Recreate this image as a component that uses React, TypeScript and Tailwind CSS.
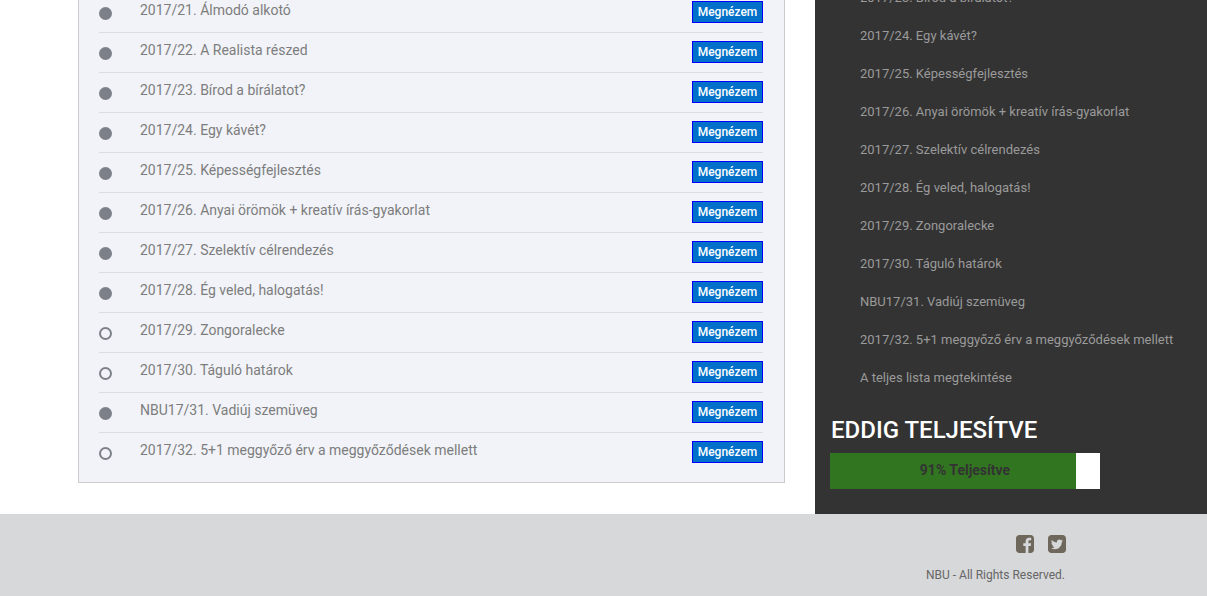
import React from 'react';

const lessons = [
  { title: '2017/21. Álmodó alkotó', done: true },
  { title: '2017/22. A Realista részed', done: true },
  { title: '2017/23. Bírod a bírálatot?', done: true },
  { title: '2017/24. Egy kávét?', done: true },
  { title: '2017/25. Képességfejlesztés', done: true },
  { title: '2017/26. Anyai örömök + kreatív írás-gyakorlat', done: true },
  { title: '2017/27. Szelektív célrendezés', done: true },
  { title: '2017/28. Ég veled, halogatás!', done: true },
  { title: '2017/29. Zongoralecke', done: false },
  { title: '2017/30. Táguló határok', done: false },
  { title: 'NBU17/31. Vadiúj szemüveg', done: true },
  { title: '2017/32. 5+1 meggyőző érv a meggyőződések mellett', done: false },
];

const sideLinks = [
  '2017/23. Bírod a bírálatot?',
  '2017/24. Egy kávét?',
  '2017/25. Képességfejlesztés',
  '2017/26. Anyai örömök + kreatív írás-gyakorlat',
  '2017/27. Szelektív célrendezés',
  '2017/28. Ég veled, halogatás!',
  '2017/29. Zongoralecke',
  '2017/30. Táguló határok',
  'NBU17/31. Vadiúj szemüveg',
  '2017/32. 5+1 meggyőző érv a meggyőződések mellett',
  'A teljes lista megtekintése',
];

const FacebookSquare = () => (
  <svg viewBox="128 128 1536 1536" className="h-[18px] w-[18px] fill-current">
    <path d="M1376 128q119 0 203.5 84.5t84.5 203.5v960q0 119-84.5 203.5t-203.5 84.5h-188v-595h199l30-232h-229v-148q0-56 23.5-84t91.5-28l122-1v-207q-63-9-178-9-136 0-217.5 80t-81.5 226v171h-200v232h200v595h-532q-119 0-203.5-84.5t-84.5-203.5v-960q0-119 84.5-203.5t203.5-84.5h960z" />
  </svg>
);

const TwitterSquare = () => (
  <svg viewBox="128 128 1536 1536" className="h-[18px] w-[18px] fill-current">
    <path d="M1408 610q-56 25-121 34 68-40 93-117-65 38-134 51-61-66-153-66-87 0-148.5 61.5t-61.5 148.5q0 29 5 48-129-7-242-65t-192-155q-29 50-29 106 0 114 91 175-47-1-100-26v2q0 75 50 133.5t123 72.5q-29 8-51 8-13 0-39-4 21 63 74.5 104t121.5 42q-116 90-261 90-26 0-50-3 148 94 322 94 112 0 210-35.5t168-95 120.5-137 75-162 24.5-168.5q0-18-1-27 63-45 105-109zm256-194v960q0 119-84.5 203.5t-203.5 84.5h-960q-119 0-203.5-84.5t-84.5-203.5v-960q0-119 84.5-203.5t203.5-84.5h960q119 0 203.5 84.5t84.5 203.5z" />
  </svg>
);

export default function App() {
  return (
    <div className="h-[596px] overflow-hidden bg-white font-['Roboto',sans-serif]">
      <div className="flex h-[514px] overflow-hidden">
        {/* Lesson list */}
        <main className="w-[815px] shrink-0 pl-[78px] pr-[30px]">
          <div className="-mt-[8px] border border-[#cccccc] bg-[#f1f3f8] pl-[20px] pr-[21px] pb-[9px]">
            {lessons.map((item, i) => (
              <div
                key={item.title}
                className={`flex h-[40px] items-center border-b ${i < lessons.length - 1 ? 'border-[#dcdde0]' : 'border-transparent'}`}
              >
                {item.done ? (
                  <span className="mt-[1px] h-[13px] w-[13px] shrink-0 rounded-full bg-[#7c8189]" />
                ) : (
                  <span className="mt-[1px] h-[13px] w-[13px] shrink-0 rounded-full border-2 border-[#7c8189]" />
                )}
                <span className="ml-[28px] -mt-[5px] flex-1 text-[14px] leading-[20px] text-[#7d7d7d]">
                  {item.title}
                </span>
                <button className="-mt-[2px] h-[22px] w-[71px] border border-[#0000ff] bg-[#0070c9] text-[12px] font-medium leading-[20px] text-white">
                  Megnézem
                </button>
              </div>
            ))}
          </div>
        </main>

        {/* Sidebar */}
        <aside className="flex-1 bg-[#333333] pl-[15px]">
          <ul className="-mt-[21px] pl-[30px]">
            {sideLinks.map((link) => (
              <li key={link} className="flex h-[38px] items-center text-[13px] text-[#9a9a9a]">
                {link}
              </li>
            ))}
          </ul>
          <h3 className="mt-[18px] pl-[1px] text-[24px] font-medium leading-[30px] text-white">EDDIG TELJESÍTVE</h3>
          <div className="relative mt-[8px] h-[36px] w-[270px] bg-white">
            <div className="h-full w-[91%] bg-[#317520]" />
            <span className="absolute inset-0 -top-[1px] flex items-center justify-center text-[14px] font-bold text-[#333333]">
              91% Teljesítve
            </span>
          </div>
        </aside>
      </div>

      {/* Footer */}
      <footer className="flex h-[82px] flex-col items-end bg-[#d7d8da] pr-[141px] pt-[21px]">
        <div className="flex gap-[14px] text-[#6e675c]">
          <FacebookSquare />
          <TwitterSquare />
        </div>
        <p className="mr-[1px] mt-[14px] text-[12px] leading-[16px] text-[#666666]">NBU - All Rights Reserved.</p>
      </footer>
    </div>
  );
}
